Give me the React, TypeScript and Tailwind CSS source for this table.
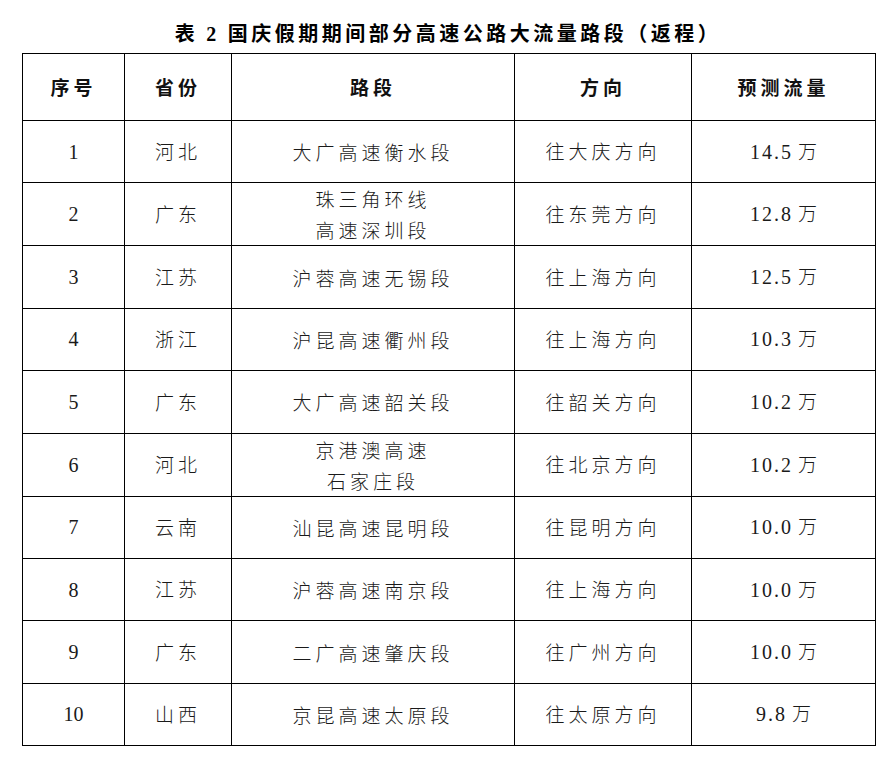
const rows: { no: string; prov: string; road: string[]; dir: string; flow: string }[] = [
  { no: '1', prov: '河北', road: ['大广高速衡水段'], dir: '往大庆方向', flow: '14.5' },
  { no: '2', prov: '广东', road: ['珠三角环线', '高速深圳段'], dir: '往东莞方向', flow: '12.8' },
  { no: '3', prov: '江苏', road: ['沪蓉高速无锡段'], dir: '往上海方向', flow: '12.5' },
  { no: '4', prov: '浙江', road: ['沪昆高速衢州段'], dir: '往上海方向', flow: '10.3' },
  { no: '5', prov: '广东', road: ['大广高速韶关段'], dir: '往韶关方向', flow: '10.2' },
  { no: '6', prov: '河北', road: ['京港澳高速', '石家庄段'], dir: '往北京方向', flow: '10.2' },
  { no: '7', prov: '云南', road: ['汕昆高速昆明段'], dir: '往昆明方向', flow: '10.0' },
  { no: '8', prov: '江苏', road: ['沪蓉高速南京段'], dir: '往上海方向', flow: '10.0' },
  { no: '9', prov: '广东', road: ['二广高速肇庆段'], dir: '往广州方向', flow: '10.0' },
  { no: '10', prov: '山西', road: ['京昆高速太原段'], dir: '往太原方向', flow: '9.8' },
];

const cjk = "font-['Noto_Sans_CJK_SC',sans-serif]";
const num = "font-['Liberation_Serif',serif]";

export default function App() {
  return (
    <div className="w-[895px] h-[758px] bg-white text-[#1a1a1a] pt-[19px] pl-[22px]">
      {/* Title */}
      <h1 className={`${cjk} w-[852px] text-center text-[20px] font-bold leading-[28px] tracking-[3.5px] text-black`}>
        表 <span className={num}>2</span> 国庆假期期间部分高速公路大流量路段（返程）
      </h1>

      <table className="mt-[5px] border-collapse table-fixed w-[853px]">
        <colgroup>
          <col className="w-[102px]" />
          <col className="w-[107px]" />
          <col className="w-[283px]" />
          <col className="w-[177px]" />
          <col className="w-[184px]" />
        </colgroup>
        <thead>
          <tr className="h-[67px]">
            {['序号', '省份', '路段', '方向', '预测流量'].map((h) => (
              <th
                key={h}
                className={`${cjk} border border-black text-center text-[19px] font-semibold tracking-[4px] text-[#111]`}
              >
                {h}
              </th>
            ))}
          </tr>
        </thead>
        <tbody>
          {rows.map((r) => (
            <tr key={r.no} className="h-[62.4px]">
              <td className={`${num} border border-black text-center text-[20px]`}>{r.no}</td>
              <td className={`${cjk} border border-black text-center text-[19px] font-light tracking-[4px]`}>
                {r.prov}
              </td>
              <td className={`${cjk} border border-black text-center text-[19px] font-light tracking-[4px] leading-[31px]`}>
                {r.road.map((line) => (
                  <div key={line}>{line}</div>
                ))}
              </td>
              <td className={`${cjk} border border-black text-center text-[19px] font-light tracking-[4px]`}>
                {r.dir}
              </td>
              <td className="border border-black text-center text-[20px]">
                <span className={`${num} tracking-[2px]`}>{r.flow}</span>{' '}
                <span className={`${cjk} font-light text-[19px]`}>万</span>
              </td>
            </tr>
          ))}
        </tbody>
      </table>
    </div>
  );
}
